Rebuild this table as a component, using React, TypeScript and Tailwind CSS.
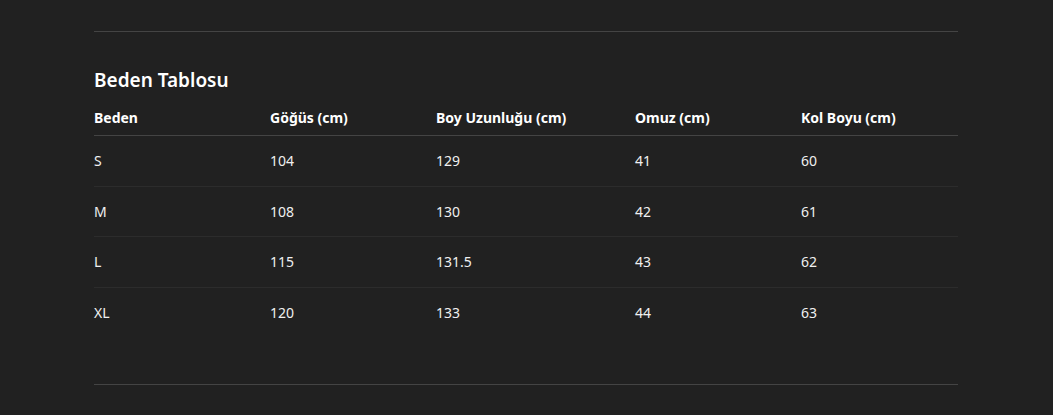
import React from "react";

const rows = [
  ["S", "104", "129", "41", "60"],
  ["M", "108", "130", "42", "61"],
  ["L", "115", "131.5", "43", "62"],
  ["XL", "120", "133", "44", "63"],
];

const headers = ["Beden", "Göğüs (cm)", "Boy Uzunluğu (cm)", "Omuz (cm)", "Kol Boyu (cm)"];
const widths = ["w-[176px]", "w-[166px]", "w-[199px]", "w-[166px]", "w-[157px]"];

export default function App() {
  return (
    <div
      className="min-h-[415px] w-full bg-[#212121] pt-[31px] text-white"
      style={{ fontFamily: '"Segoe UI", "Noto Sans", "Open Sans", sans-serif' }}
    >
      <div className="ml-[94px] w-[864px]">
        <div className="border-t border-[#444444]" />
        <h2 className="mt-[34px] text-[19px] font-semibold leading-[28px] text-white">Beden Tablosu</h2>
        <table className="mt-[6px] w-full table-fixed border-collapse text-left text-[14px]">
          <thead>
            <tr className="border-b border-[#444444]">
              {headers.map((h, i) => (
                <th key={h} className={`${widths[i]} pt-[8px] pb-[7px] font-bold leading-5 text-white`}>
                  {h}
                </th>
              ))}
            </tr>
          </thead>
          <tbody>
            {rows.map((r, ri) => (
              <tr key={r[0]} className={ri < rows.length - 1 ? "border-b border-[#2c2c2c]" : ""}>
                {r.map((c, ci) => (
                  <td key={ci} className="py-[15px] leading-[19.5px] text-[#f0f0f0]">
                    {c}
                  </td>
                ))}
              </tr>
            ))}
          </tbody>
        </table>
        <div className="mt-[47px] border-t border-[#444444]" />
      </div>
    </div>
  );
}
